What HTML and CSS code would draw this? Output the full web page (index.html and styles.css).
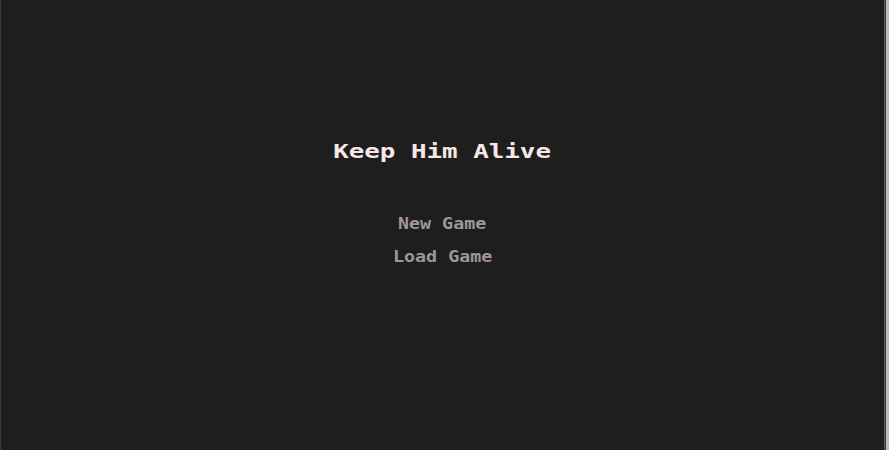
FILE: index.html
```html
<!DOCTYPE html>
<html lang="en">
<head>
<meta charset="utf-8">
<title>Keep Him Alive</title>
<link rel="stylesheet" href="styles.css">
</head>
<body>
<div class="frame">
  <main class="screen">
    <h1 class="title">Keep Him Alive</h1>
    <nav class="menu">
      <div class="menu-item">New Game</div>
      <div class="menu-item">Load Game</div>
    </nav>
  </main>
  <div class="edge"></div>
</div>
</body>
</html>
```
FILE: styles.css
```css
html, body {
  margin: 0;
  padding: 0;
  height: 100%;
  background: #1e1e1e;
}
.frame {
  display: flex;
  height: 450px;
  width: 889px;
}
.screen {
  flex: 1;
  display: flex;
  flex-direction: column;
  align-items: center;
  border-left: 1px solid #3c3c3c;
  padding-top: 139px;
  box-sizing: border-box;
  font-family: "DejaVu Sans Mono", "Liberation Mono", monospace;
  font-weight: bold;
}
.title {
  margin: 0;
  font-size: 19px;
  line-height: 24px;
  color: #f7e8e8;
  font-weight: bold;
  transform: scaleX(1.36);
}
.menu {
  display: flex;
  flex-direction: column;
  align-items: center;
  margin-top: 51px;
  gap: 13px;
}
.menu-item {
  font-size: 15px;
  line-height: 20px;
  color: #a09696;
  transform: scaleX(1.22);
}
.edge {
  width: 5px;
  background: linear-gradient(to right, #5a5a5a 0, #5a5a5a 1px, #3a3a3a 1px, #3a3a3a 2px, #bcbcbc 2px, #bcbcbc 5px);
}
```
